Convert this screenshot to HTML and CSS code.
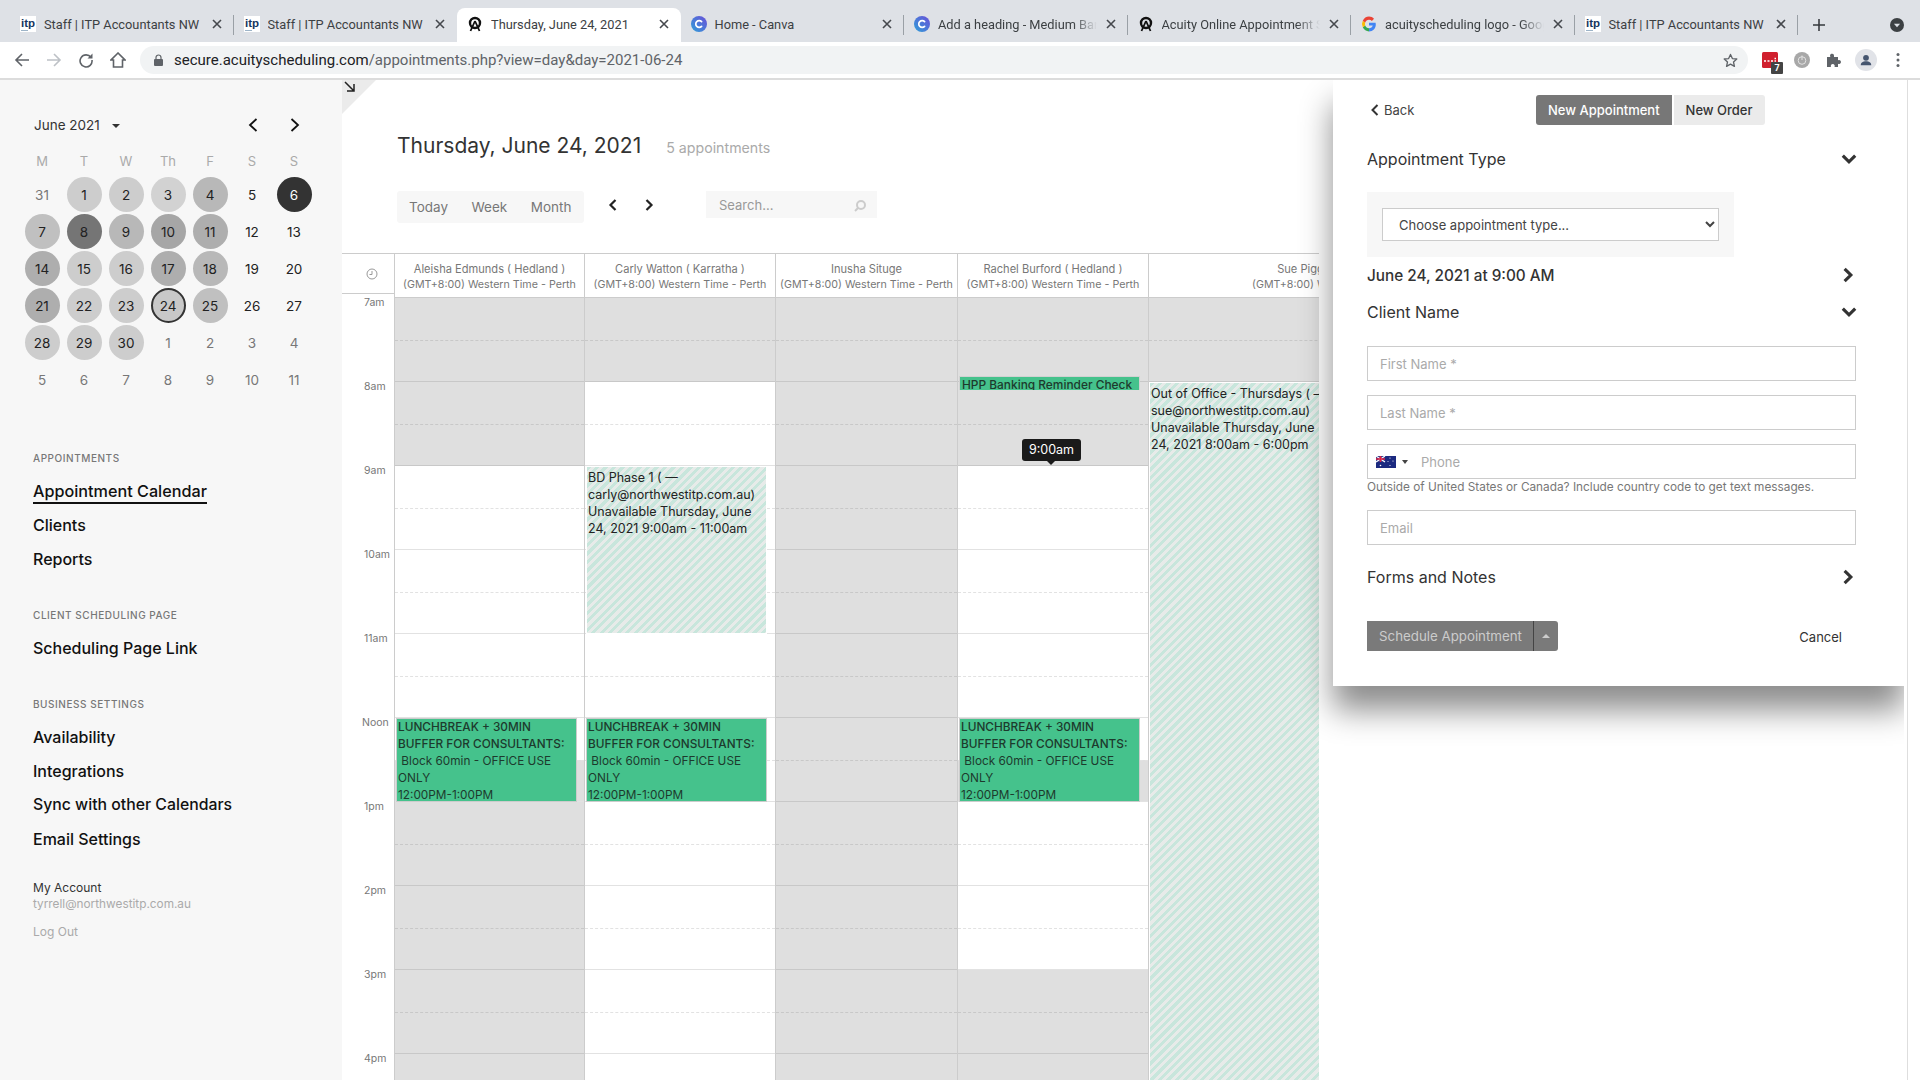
FILE: index.html
```html
<!DOCTYPE html>
<html lang="en">
<head>
<meta charset="utf-8">
<title>Thursday, June 24, 2021</title>
<link rel="stylesheet" href="styles.css">
</head>
<body>
<svg class="defs" width="0" height="0" aria-hidden="true">
  <symbol id="f-itp" viewBox="0 0 16 16"><rect width="16" height="16" fill="#fff"/><text x="8" y="11" text-anchor="middle" font-family="Liberation Sans, sans-serif" font-size="11.500" font-weight="700" fill="#16365f">itp</text><rect x="1" y="14" width="7" height="1" fill="#9db4c8"/></symbol>
  <symbol id="f-acuity" viewBox="0 0 16 16"><circle cx="8" cy="7" r="5" fill="none" stroke="#111" stroke-width="2.400"/><path d="M8 5 L3.500 15 M8 5 L12.500 15" stroke="#111" stroke-width="1.800" fill="none"/></symbol>
  <symbol id="f-canva" viewBox="0 0 16 16"><defs><linearGradient id="cv" x1="0" y1="1" x2="1" y2="0"><stop offset="0" stop-color="#2f9fd8"/><stop offset="1" stop-color="#6a4fd8"/></linearGradient></defs><circle cx="8" cy="8" r="8" fill="url(#cv)"/><path d="M10.600 5.600 A3.400 3.400 0 1 0 10.600 10.400" fill="none" stroke="#fff" stroke-width="1.700" stroke-linecap="round"/></symbol>
  <symbol id="f-google" viewBox="0 0 16 16"><path d="M14.600 6.700H8v2.700h3.800c-.4 1.600-1.900 2.800-3.800 2.800V15.400c3.900 0 6.800-2.800 6.800-6.900 0-.6-.1-1.200-.2-1.800z" fill="#4285f4"/><path d="M8 12.200c-1.800 0-3.300-1.200-3.800-2.800L1.800 11.300C3 13.800 5.300 15.400 8 15.400z" fill="#34a853"/><path d="M4.200 9.400a4.300 4.300 0 0 1 0-2.800L1.800 4.700a7.300 7.300 0 0 0 0 6.600z" fill="#fbbc05"/><path d="M8 3.800c1.100 0 2.100.4 2.900 1.100l2.100-2.100C11.700 1.500 10 .6 8 .6 5.300.6 3 2.200 1.800 4.700l2.400 1.900C4.700 5 6.200 3.800 8 3.800z" fill="#ea4335"/></symbol>
  <symbol id="c-x" viewBox="0 0 12 12"><path d="M2 2L10 10M10 2L2 10" stroke="#45484d" stroke-width="1.600" fill="none"/></symbol>
  <symbol id="chev-down" viewBox="0 0 16 16"><path d="M2.500 5L8 10.500 13.500 5" stroke="#333" stroke-width="2.800" fill="none"/></symbol>
  <symbol id="chev-right" viewBox="0 0 16 16"><path d="M5 2.500L10.500 8 5 13.500" stroke="#333" stroke-width="2.800" fill="none"/></symbol>
</svg>

<header class="chrome">
  <div class="tabstrip">
    <div class="tab"><svg class="fav"><use href="#f-itp"/></svg><span class="tab-title">Staff | ITP Accountants NW</span><svg class="tab-x"><use href="#c-x"/></svg></div>
    <div class="tab before-active"><svg class="fav"><use href="#f-itp"/></svg><span class="tab-title">Staff | ITP Accountants NW</span><svg class="tab-x"><use href="#c-x"/></svg></div>
    <div class="tab active"><svg class="fav"><use href="#f-acuity"/></svg><span class="tab-title">Thursday, June 24, 2021</span><svg class="tab-x"><use href="#c-x"/></svg></div>
    <div class="tab"><svg class="fav"><use href="#f-canva"/></svg><span class="tab-title">Home - Canva</span><svg class="tab-x"><use href="#c-x"/></svg></div>
    <div class="tab"><svg class="fav"><use href="#f-canva"/></svg><span class="tab-title fade">Add a heading - Medium Banner</span><svg class="tab-x"><use href="#c-x"/></svg></div>
    <div class="tab"><svg class="fav"><use href="#f-acuity"/></svg><span class="tab-title fade">Acuity Online Appointment Scheduling</span><svg class="tab-x"><use href="#c-x"/></svg></div>
    <div class="tab"><svg class="fav"><use href="#f-google"/></svg><span class="tab-title fade">acuityscheduling logo - Google Search</span><svg class="tab-x"><use href="#c-x"/></svg></div>
    <div class="tab"><svg class="fav"><use href="#f-itp"/></svg><span class="tab-title">Staff | ITP Accountants NW</span><svg class="tab-x"><use href="#c-x"/></svg></div>
    <svg class="newtab" viewBox="0 0 14 14"><path d="M7 0V14M0 7H14" stroke="#35383c" stroke-width="1.800"/></svg>
    <div class="spacer"></div>
    <svg class="tabsearch" viewBox="0 0 16 16"><circle cx="8" cy="8" r="8" fill="#3c4043"/><path d="M4.500 6.500H11.500L8 10.500z" fill="#dee1e6"/></svg>
  </div>
  <div class="toolbar">
    <button class="tb"><svg viewBox="0 0 16 16"><path d="M15 8H2M8 2L2 8l6 6" stroke="#5f6368" stroke-width="1.600" fill="none"/></svg></button>
    <button class="tb"><svg viewBox="0 0 16 16"><path d="M1 8H14M8 2l6 6-6 6" stroke="#bdc1c6" stroke-width="1.600" fill="none"/></svg></button>
    <button class="tb"><svg viewBox="0 0 16 16"><path d="M13 5.500A6 6 0 1 0 14 8" stroke="#5f6368" stroke-width="1.600" fill="none"/><path d="M14.500 1.500V6.500H9.500z" fill="#5f6368"/></svg></button>
    <button class="tb"><svg viewBox="0 0 16 16"><path d="M8 1L1 8H3.500V15H12.500V8H15z" stroke="#5f6368" stroke-width="1.600" fill="none"/></svg></button>
    <div class="omni">
      <svg class="lock" viewBox="0 0 10 12"><rect y="5" width="9" height="7" rx="1" fill="#5f6368"/><path d="M2 5.500V3.500a2.500 2.500 0 0 1 5 0V5.500" stroke="#5f6368" stroke-width="1.200" fill="none"/></svg>
      <span class="url"><b class="host">secure.acuityscheduling.com</b>/appointments.php?view=day&amp;day=2021-06-24</span>
      <svg class="star" viewBox="0 0 16 16"><path d="M8 1.500l2 4.400 4.700.5-3.500 3.200 1 4.700L8 11.900l-4.200 2.400 1-4.700L1.300 6.400 6 5.900z" stroke="#5f6368" stroke-width="1.400" fill="none" stroke-linejoin="round"/></svg>
    </div>
    <div class="ext">
      <svg viewBox="0 0 16 16"><rect width="16" height="16" rx="1.500" fill="#d0202e"/><path d="M2 9h2M5.500 9h2M9 9h2M12.500 9h1.500M12.500 6.500h1.500" stroke="#fff" stroke-width="1.600"/></svg>
      <span class="ext-badge">7</span>
    </div>
    <button class="tb"><svg viewBox="0 0 16 16"><circle cx="8" cy="8" r="8" fill="#a8a8a8"/><circle cx="8" cy="8.500" r="3.800" fill="none" stroke="#e2e2e2" stroke-width="1"/><path d="M8 3.500V8" stroke="#e2e2e2" stroke-width="1"/></svg></button>
    <button class="tb"><svg viewBox="0 0 16 16"><path d="M1 5h3.500a2 2 0 1 1 3.500-1.200V5H12v3.300a2 2 0 1 1 0 3.500V15H8.500a2 2 0 1 0-3.500 0H1z" fill="#5f6368"/></svg></button>
    <button class="tb"><span class="avatar"><svg viewBox="0 0 16 16"><circle cx="8" cy="5.500" r="3.300" fill="#45556f"/><path d="M2 14c0-3.300 2.700-4.500 6-4.500s6 1.200 6 4.500z" fill="#45556f"/></svg></span></button>
    <button class="tb"><svg viewBox="0 0 16 16"><circle cx="8" cy="2.500" r="1.500" fill="#5f6368"/><circle cx="8" cy="8" r="1.500" fill="#5f6368"/><circle cx="8" cy="13.500" r="1.500" fill="#5f6368"/></svg></button>
  </div>
</header>

<div class="app">
  <aside class="sidebar">
    <div class="month-head">
      <span class="month-name">June 2021</span>
      <span class="month-caret"></span>
      <span class="spacer"></span>
      <svg class="month-arrow" viewBox="0 0 12 16"><path d="M9.500 2L3 8l6.500 6" stroke="#111" stroke-width="1.800" fill="none"/></svg>
      <svg class="month-arrow" viewBox="0 0 12 16"><path d="M2.500 2L9 8l-6.500 6" stroke="#111" stroke-width="1.800" fill="none"/></svg>
    </div>
    <div class="mini-cal">
      <span class="wd">M</span><span class="wd">T</span><span class="wd">W</span><span class="wd">Th</span><span class="wd">F</span><span class="wd">S</span><span class="wd">S</span>
      <span class="d out">31</span><span class="d s3">1</span><span class="d s3">2</span><span class="d s2">3</span><span class="d s5">4</span><span class="d">5</span><span class="d dark">6</span>
      <span class="d s4">7</span><span class="d s8">8</span><span class="d s5">9</span><span class="d s7">10</span><span class="d s6">11</span><span class="d">12</span><span class="d">13</span>
      <span class="d s6">14</span><span class="d s3">15</span><span class="d s3">16</span><span class="d s6">17</span><span class="d s5">18</span><span class="d">19</span><span class="d">20</span>
      <span class="d s6">21</span><span class="d s3">22</span><span class="d s3">23</span><span class="d s3 today">24</span><span class="d s4">25</span><span class="d">26</span><span class="d">27</span>
      <span class="d s3">28</span><span class="d s3">29</span><span class="d s3">30</span><span class="d out">1</span><span class="d out">2</span><span class="d out">3</span><span class="d out">4</span>
      <span class="d out">5</span><span class="d out">6</span><span class="d out">7</span><span class="d out">8</span><span class="d out">9</span><span class="d out">10</span><span class="d out">11</span>
    </div>
    <nav class="nav">
      <h4 class="nav-head">APPOINTMENTS</h4>
      <a class="nav-link current"><span>Appointment Calendar</span></a>
      <a class="nav-link">Clients</a>
      <a class="nav-link">Reports</a>
      <h4 class="nav-head second">CLIENT SCHEDULING PAGE</h4>
      <a class="nav-link">Scheduling Page Link</a>
      <h4 class="nav-head second">BUSINESS SETTINGS</h4>
      <a class="nav-link">Availability</a>
      <a class="nav-link">Integrations</a>
      <a class="nav-link sync">Sync with other Calendars</a>
      <a class="nav-link">Email Settings</a>
    </nav>
    <div class="account">
      <div class="acc-name">My Account</div>
      <div class="acc-mail">tyrrell@northwestitp.com.au</div>
      <div class="acc-out">Log Out</div>
    </div>
  </aside>

  <main class="main">
    <div class="corner"><svg viewBox="0 0 12 12"><path d="M1 1L10 10M10 3V10H3" stroke="#222" stroke-width="1.500" fill="none"/></svg></div>
    <div class="page-head">
      <div class="title-row"><h1 class="title">Thursday, June 24, 2021</h1><span class="count">5 appointments</span></div>
      <div class="controls">
        <div class="seg"><span>Today</span><span>Week</span><span>Month</span></div>
        <div class="day-nav">
          <svg viewBox="0 0 12 14"><path d="M8.500 2L3.500 7l5 5" stroke="#222" stroke-width="2.200" fill="none"/></svg>
          <svg viewBox="0 0 12 14"><path d="M3.500 2L8.500 7l-5 5" stroke="#222" stroke-width="2.200" fill="none"/></svg>
        </div>
        <div class="search"><span>Search...</span><svg viewBox="0 0 14 14"><circle cx="8" cy="6" r="4" fill="none" stroke="#ccc" stroke-width="2"/><path d="M5 9L2 12" stroke="#ccc" stroke-width="2"/></svg></div>
      </div>
    </div>

    <div class="calendar">
      <div class="time-col">
        <div class="time-head"><svg viewBox="0 0 12 12"><circle cx="6" cy="6" r="5" fill="none" stroke="#999" stroke-width="1"/><path d="M6 3V6.500H3.500" stroke="#999" stroke-width="1" fill="none"/></svg></div>
        <div class="tl">7am</div><div class="tl">8am</div><div class="tl">9am</div><div class="tl">10am</div><div class="tl">11am</div><div class="tl noon">Noon</div><div class="tl">1pm</div><div class="tl">2pm</div><div class="tl">3pm</div><div class="tl">4pm</div>
      </div>

      <section class="col w1">
        <div class="col-head"><span class="who">Aleisha Edmunds ( Hedland )</span><span class="tz">(GMT+8:00) Western Time - Perth</span></div>
        <div class="col-body">
          <div class="h g"></div><div class="h g"></div><div class="h"></div><div class="h"></div><div class="h"></div><div class="h split"></div><div class="h g"></div><div class="h g"></div><div class="h g"></div><div class="h g"></div>
          <div class="ev lunch"><strong>LUNCHBREAK + 30MIN BUFFER FOR CONSULTANTS:</strong><br>&nbsp;Block 60min - OFFICE USE ONLY<br>12:00PM-1:00PM</div>
        </div>
      </section>

      <section class="col w2">
        <div class="col-head"><span class="who">Carly Watton ( Karratha )</span><span class="tz">(GMT+8:00) Western Time - Perth</span></div>
        <div class="col-body">
          <div class="h g"></div><div class="h"></div><div class="h"></div><div class="h"></div><div class="h"></div><div class="h"></div><div class="h"></div><div class="h"></div><div class="h"></div><div class="h"></div>
          <div class="ev stripe bd">BD Phase 1 ( —<br>carly@northwestitp.com.au)<br>Unavailable Thursday, June<br>24, 2021 9:00am - 11:00am</div>
          <div class="ev lunch"><strong>LUNCHBREAK + 30MIN BUFFER FOR CONSULTANTS:</strong><br>&nbsp;Block 60min - OFFICE USE ONLY<br>12:00PM-1:00PM</div>
        </div>
      </section>

      <section class="col w3">
        <div class="col-head"><span class="who">Inusha Situge</span><span class="tz">(GMT+8:00) Western Time - Perth</span></div>
        <div class="col-body">
          <div class="h g"></div><div class="h g"></div><div class="h g"></div><div class="h g"></div><div class="h g"></div><div class="h g"></div><div class="h g"></div><div class="h g"></div><div class="h g"></div><div class="h g"></div>
        </div>
      </section>

      <section class="col w4">
        <div class="col-head"><span class="who">Rachel Burford ( Hedland )</span><span class="tz">(GMT+8:00) Western Time - Perth</span></div>
        <div class="col-body">
          <div class="h g"></div><div class="h g"></div><div class="h"></div><div class="h"></div><div class="h"></div><div class="h split"></div><div class="h"></div><div class="h"></div><div class="h g"></div><div class="h g"></div>
          <div class="ev hpp"><strong>HPP Banking Reminder Check</strong></div>
          <div class="dash"></div>
          <div class="tip">9:00am</div>
          <div class="ev lunch"><strong>LUNCHBREAK + 30MIN BUFFER FOR CONSULTANTS:</strong><br>&nbsp;Block 60min - OFFICE USE ONLY<br>12:00PM-1:00PM</div>
        </div>
      </section>

      <section class="col w5">
        <div class="col-head"><span class="who">Sue Piggott ( Karratha )</span><span class="tz">(GMT+8:00) Western Time - Perth</span></div>
        <div class="col-body">
          <div class="h g"></div><div class="h"></div><div class="h"></div><div class="h"></div><div class="h"></div><div class="h"></div><div class="h"></div><div class="h"></div><div class="h"></div><div class="h"></div>
          <div class="ev stripe ooo">Out of Office - Thursdays ( —<br>sue@northwestitp.com.au)<br>Unavailable Thursday, June<br>24, 2021 8:00am - 6:00pm</div>
        </div>
      </section>
    </div>

    <div class="panel">
      <div class="panel-top">
        <a class="back"><svg viewBox="0 0 10 14"><path d="M7.500 2L2.500 7l5 5" stroke="#333" stroke-width="2" fill="none"/></svg>Back</a>
        <div class="switch"><span class="on">New Appointment</span><span>New Order</span></div>
      </div>
      <div class="sec first"><span>Appointment Type</span><svg class="sec-i"><use href="#chev-down"/></svg></div>
      <div class="type-box">
        <select class="type-select"><option>Choose appointment type...</option></select>
      </div>
      <div class="sec date"><span>June 24, 2021 at 9:00 AM</span><svg class="sec-i r"><use href="#chev-right"/></svg></div>
      <div class="sec client"><span>Client Name</span><svg class="sec-i"><use href="#chev-down"/></svg></div>
      <input class="field" placeholder="First Name *">
      <input class="field" placeholder="Last Name *">
      <div class="field phone">
        <svg class="flag" viewBox="0 0 20 12"><rect width="20" height="12" fill="#1c2a80"/><rect width="9" height="6" fill="#2a3a90"/><path d="M0 0L9 6M9 0L0 6" stroke="#fff" stroke-width="1.200"/><path d="M4.500 0V6M0 3H9" stroke="#e02040" stroke-width="1.600"/><g fill="#fff"><circle cx="4.500" cy="9.500" r=".8"/><circle cx="14" cy="2" r=".6"/><circle cx="17" cy="5" r=".6"/><circle cx="14" cy="9.500" r=".6"/><circle cx="12" cy="5.500" r=".5"/></g></svg>
        <span class="flag-caret"></span>
        <input class="phone-in" placeholder="Phone">
      </div>
      <p class="help">Outside of United States or Canada? Include country code to get text messages.</p>
      <input class="field email" placeholder="Email">
      <div class="sec forms"><span>Forms and Notes</span><svg class="sec-i r"><use href="#chev-right"/></svg></div>
      <div class="actions">
        <div class="sched"><span class="sched-main">Schedule Appointment</span><span class="sched-more"><i></i></span></div>
        <a class="cancel">Cancel</a>
      </div>
    </div>
  </main>
  <div class="scrollbar"></div>
</div>
</body>
</html>
```
FILE: styles.css
```css
* { box-sizing: border-box; }
html, body { margin: 0; height: 1080px; overflow: hidden; background: #fff; }
body { font-family: Inter, "Liberation Sans", sans-serif; color: #333; display: flex; flex-direction: column; }
.defs { display: block; height: 0; }
.spacer { flex: 1; }
button { border: 0; background: none; padding: 0; margin: 0; }

/* browser chrome */
.chrome { flex: none; height: 80px; font-family: Roboto, "Liberation Sans", sans-serif; }
.tabstrip { height: 42px; background: #dee1e6; display: flex; align-items: flex-end; padding-left: 10px; }
.tab { width: 223.5px; height: 34px; flex: none; display: flex; align-items: center; gap: 8px; padding: 0 11px 2px 10px; position: relative; font-size: 12.8px; color: #3c4043; }
.tab::after { content: ""; position: absolute; right: 0; top: 7px; height: 20px; width: 1px; background: #9aa0a6; }
.tab.active::after, .tab.before-active::after { display: none; }
.tab.active { background: #fff; border-radius: 8px 8px 0 0; color: #3c4043; }
.fav { width: 16px; height: 16px; flex: none; }
.tab-title { flex: 1; white-space: nowrap; overflow: hidden; }
.tab-title.fade { -webkit-mask-image: linear-gradient(90deg, #000 85%, transparent 100%); mask-image: linear-gradient(90deg, #000 85%, transparent 100%); }
.tab-x { width: 12px; height: 12px; flex: none; }
.newtab { width: 12px; height: 12px; margin: 0 0 11px 15px; flex: none; }
.tabsearch { width: 14px; height: 14px; margin: 0 16px 10px 0; flex: none; }

.toolbar { height: 38px; background: #fff; border-bottom: 2px solid #dcdcdc; padding: 0 6px; display: flex; align-items: center; }
.tb { width: 32px; height: 32px; flex: none; display: flex; align-items: center; justify-content: center; }
.tb svg { width: 16px; height: 16px; }
.omni { flex: 1; height: 28px; margin: 0 6px; background: #f1f3f4; border-radius: 14px; display: flex; align-items: center; padding: 0 10px 0 14px; }
.lock { width: 10px; height: 12px; margin-right: 10px; flex: none; }
.url { flex: 1; font-size: 15px; color: #5f6368; white-space: nowrap; }
.host { font-weight: 400; color: #202124; }
.star { width: 15px; height: 15px; flex: none; }
.ext { width: 32px; height: 32px; flex: none; display: flex; align-items: center; justify-content: center; position: relative; }
.ext svg { width: 16px; height: 16px; }
.ext-badge { position: absolute; left: 17px; top: 18px; width: 12px; height: 12px; background: #444; color: #fff; font-size: 9px; line-height: 12px; text-align: center; border-radius: 1px; font-weight: 700; }
.avatar { width: 22px; height: 22px; border-radius: 50%; background: #e1e3e8; display: flex; align-items: center; justify-content: center; }
.avatar svg { width: 14px; height: 14px; }

/* page */
.app { flex: 1; display: flex; min-height: 0; }
.sidebar { width: 342px; flex: none; background: #f7f7f7; padding: 0 0 0 21px; }
.month-head { display: flex; align-items: center; height: 30px; margin-top: 30px; padding: 0 41px 0 13px; }
.month-name { font-size: 13.5px; color: #333; }
.month-caret { margin: 2px 0 0 12px; border: 4px solid transparent; border-top-color: #333; border-bottom: 0; }
.month-arrow { width: 12px; height: 16px; margin-left: 30px; }
.mini-cal { display: grid; grid-template-columns: repeat(7, 42px); grid-template-rows: 30px; grid-auto-rows: 37px; width: 294px; margin-top: 6px; }
.wd { display: flex; align-items: center; justify-content: center; font-size: 13px; color: #aaa; }
.d { width: 35px; height: 35px; justify-self: center; align-self: center; border-radius: 50%; display: flex; align-items: center; justify-content: center; font-size: 13.5px; color: #222; }
.d.out { color: #777; }
.d.dark { background: #333; color: #fff; }
.s2 { background: #d2d2d2; }
.s3 { background: #cdcdcd; }
.s4 { background: #c0c0c0; }
.s5 { background: #b8b8b8; }
.s6 { background: #aeaeae; }
.s7 { background: #a6a6a6; }
.s8 { background: #757575; }
.d.today { border: 2px solid #333; background: #c8c8c8; }

.nav { padding-left: 12px; margin-top: 53px; display: flex; flex-direction: column; align-items: flex-start; }
.nav-head { margin: 0 0 9px; font-size: 10px; line-height: 14px; font-weight: 500; letter-spacing: .55px; color: #777; }
.nav-head.second { margin-top: 32px; }
.nav-link { font-size: 16px; line-height: 34px; height: 34px; font-weight: 500; color: #111; }
.nav-link.sync { font-size: 15.8px; }
.nav-link.current { font-size: 16.2px; }
.nav-link.current span { display: inline-block; line-height: 22px; border-bottom: 2px solid #111; }
.account { padding-left: 12px; margin-top: 23px; font-size: 12px; line-height: 17px; }
.acc-name { color: #333; }
.acc-mail { color: #aaa; font-size: 11.8px; }
.acc-out { color: #aaa; margin-top: 10px; }

.main { flex: 1; min-width: 0; position: relative; overflow: hidden; background: #fff; }
.corner { position: absolute; left: 0; top: 0; width: 34px; height: 34px; background: #ebebeb; clip-path: polygon(0 0, 100% 0, 0 100%); }
.corner svg { display: block; width: 12px; height: 12px; margin: 1px 0 0 2px; }
.page-head { height: 173px; padding: 52px 0 0 55px; }
.title-row { display: flex; align-items: baseline; height: 28px; }
.title { margin: 0; font-size: 21px; line-height: 28px; font-weight: 400; color: #333; }
.count { margin-left: 25px; font-size: 14.2px; color: #aaa; }
.controls { display: flex; align-items: flex-start; margin-top: 31px; }
.seg { width: 187px; height: 32px; background: #f7f7f7; border-radius: 3px; display: flex; align-items: center; gap: 23.5px; padding: 0 0 0 12px; font-size: 13.5px; color: #777; }
.day-nav { display: flex; gap: 24px; width: 122px; padding: 7px 0 0 23px; }
.day-nav svg { width: 12px; height: 14px; }
.search { width: 171px; height: 27px; background: #f7f7f7; display: flex; align-items: center; justify-content: space-between; padding: 0 10px 0 13px; font-size: 13px; color: #999; }
.search svg { width: 14px; height: 14px; margin-top: 2px; }

.calendar { width: 977px; height: 827px; display: flex; overflow: hidden; border-top: 1px solid #ccc; }
.time-col { width: 52px; flex: none; }
.time-head { height: 40px; margin-bottom: 4px; border-bottom: 1px solid #ccc; display: flex; align-items: center; justify-content: center; padding: 0 0 0 4px; }
.time-head svg { width: 12px; height: 12px; margin-left: 3px; }
.tl { height: 84px; padding: 0 0 0 22px; font-size: 10.5px; line-height: 10px; color: #777; }
.tl.noon { padding-left: 20px; }
.col { flex: none; border-left: 1px solid #ccc; }
.w1 { width: 190px; }
.w2 { width: 191px; }
.w3 { width: 182px; }
.w4 { width: 191px; }
.w5 { width: 380px; }
.col-head { height: 44px; padding-top: 7px; border-bottom: 1px solid #ccc; display: flex; flex-direction: column; align-items: center; white-space: nowrap; line-height: 16px; color: #777; }
.who { font-size: 11.1px; }
.tz { font-size: 10.7px; }
.col-body { position: relative; }
.h { height: 84px; border-bottom: 1px solid #e2e2e2; background: #fff; }
.h::before { content: ""; display: block; height: 42px; border-bottom: 1px dashed #e2e2e2; }
.h.g { background: #dfdfdf; border-bottom-color: #c8c8c8; }
.h.g::before { border-bottom-color: #c8c8c8; }
.h.split { background: linear-gradient(#fff 0 42px, #dfdfdf 42px); }
.ev { position: absolute; font-size: 12.5px; line-height: 17px; color: #222; overflow: hidden; white-space: normal; }
.ev strong { font-weight: 500; }
.lunch { left: 1px; top: 420px; width: 181px; height: 84px; padding: 0 1px; font-size: 11.8px; background: #45c28c; border: 1px solid #ccc; color: #1d3a2d; }
.stripe { background: repeating-linear-gradient(135deg, #c8e6dc 0 3px, #e7ebe9 3px 6px); border: 1px solid #fff; }
.bd { left: 1px; top: 168px; width: 181px; height: 168px; padding: 2px 0 0 1px; }
.ooo { left: 0; top: 84px; width: 378px; height: 840px; padding: 2px 0 0 1px; }
.hpp { left: 1px; top: 78px; width: 181px; height: 14px; padding: 0 2px; font-size: 11.9px; background: #45c28c; border: 1px solid #d2d2d2; border-bottom: 0; color: #1d3a2d; line-height: 15px; white-space: nowrap; }
.dash { position: absolute; left: 0; right: 0; top: 168px; border-top: 2px dashed #fff; }
.tip { position: absolute; left: 64px; top: 141px; width: 59px; height: 22px; background: #1a1a1a; border-radius: 3px; color: #fff; font-size: 12.5px; line-height: 22px; text-align: center; }
.tip::after { content: ""; position: absolute; left: 25px; top: 22px; border: 4px solid transparent; border-top-color: #1a1a1a; border-bottom: 0; }

/* appointment panel */
.panel { position: absolute; left: 991px; top: 0; width: 571px; height: 606px; padding: 15px 0 0 34px; background: #fff; box-shadow: 0 24px 30px rgba(0,0,0,.45); clip-path: inset(0 0 -80px -60px); }
.panel-top { display: flex; align-items: center; height: 30px; }
.back { display: flex; align-items: center; width: 169px; font-size: 13px; color: #444; padding-left: 3px; }
.back svg { width: 10px; height: 14px; margin-right: 4px; }
.switch { display: flex; gap: 2px; font-size: 13px; font-weight: 500; }
.switch span { height: 30px; line-height: 30px; padding: 0 12px; background: #ebebeb; color: #333; border-radius: 0 3px 3px 0; }
.switch .on { background: #777; color: #fff; border-radius: 3px 0 0 3px; }
.sec { width: 488px; display: flex; align-items: center; justify-content: space-between; font-size: 16px; color: #333; height: 24px; }
.sec-i { width: 18px; height: 18px; margin-right: -3px; }
.sec-i.r { margin-right: -2px; }
.sec.first { margin-top: 22px; }
.type-box { width: 367px; height: 65px; margin-top: 21px; background: #f7f7f7; padding: 16px 0 0 15px; }
.type-select { display: block; width: 337px; height: 33px; padding: 0 0 0 12px; border: 1px solid #ccc; background: #fff; font: 13px Inter, sans-serif; color: #444; border-radius: 0; }
.sec.date { margin-top: 6px; font-size: 15.3px; font-weight: 500; }
.sec.client { margin-top: 13px; }
.field { display: block; width: 489px; height: 35px; margin-top: 14px; padding: 0 12px; border: 1px solid #ccc; font: 13px Inter, sans-serif; color: #333; background: #fff; border-radius: 0; outline: 0; }
.sec.client + .field { margin-top: 22px; }
.field::placeholder, .phone-in::placeholder { color: #aaa; opacity: 1; }
.phone { display: flex; align-items: center; padding: 0 0 0 8px; }
.flag { width: 20px; height: 12px; flex: none; }
.flag-caret { margin: 0 0 0 6px; border: 3px solid transparent; border-top: 4px solid #444; border-bottom: 0; }
.phone-in { flex: 1; min-width: 0; margin-left: 13px; border: 0; outline: 0; padding: 0; font: 13px Inter, sans-serif; }
.help { margin: 1px 0 0; font-size: 11.8px; line-height: 15px; color: #777; }
.field.email { margin-top: 15px; }
.sec.forms { margin-top: 20px; }
.actions { width: 488px; display: flex; align-items: center; justify-content: space-between; margin-top: 32px; padding-right: 13px; }
.sched { display: flex; height: 30px; width: 191px; background: #7a7a7a; border-radius: 0 3px 3px 0; font-size: 13.3px; line-height: 30px; color: #ccc; }
.sched-main { width: 167px; padding-left: 12px; white-space: nowrap; border-right: 1px solid #444; }
.sched-more { flex: 1; display: flex; align-items: center; justify-content: center; }
.sched-more i { display: block; border: 4px solid transparent; border-bottom-color: #ccc; border-top: 0; }
.cancel { font-size: 13px; color: #333; padding-top: 2px; }

.scrollbar { width: 13px; flex: none; border-left: 1px solid #dedede; background: #fff; }
```
